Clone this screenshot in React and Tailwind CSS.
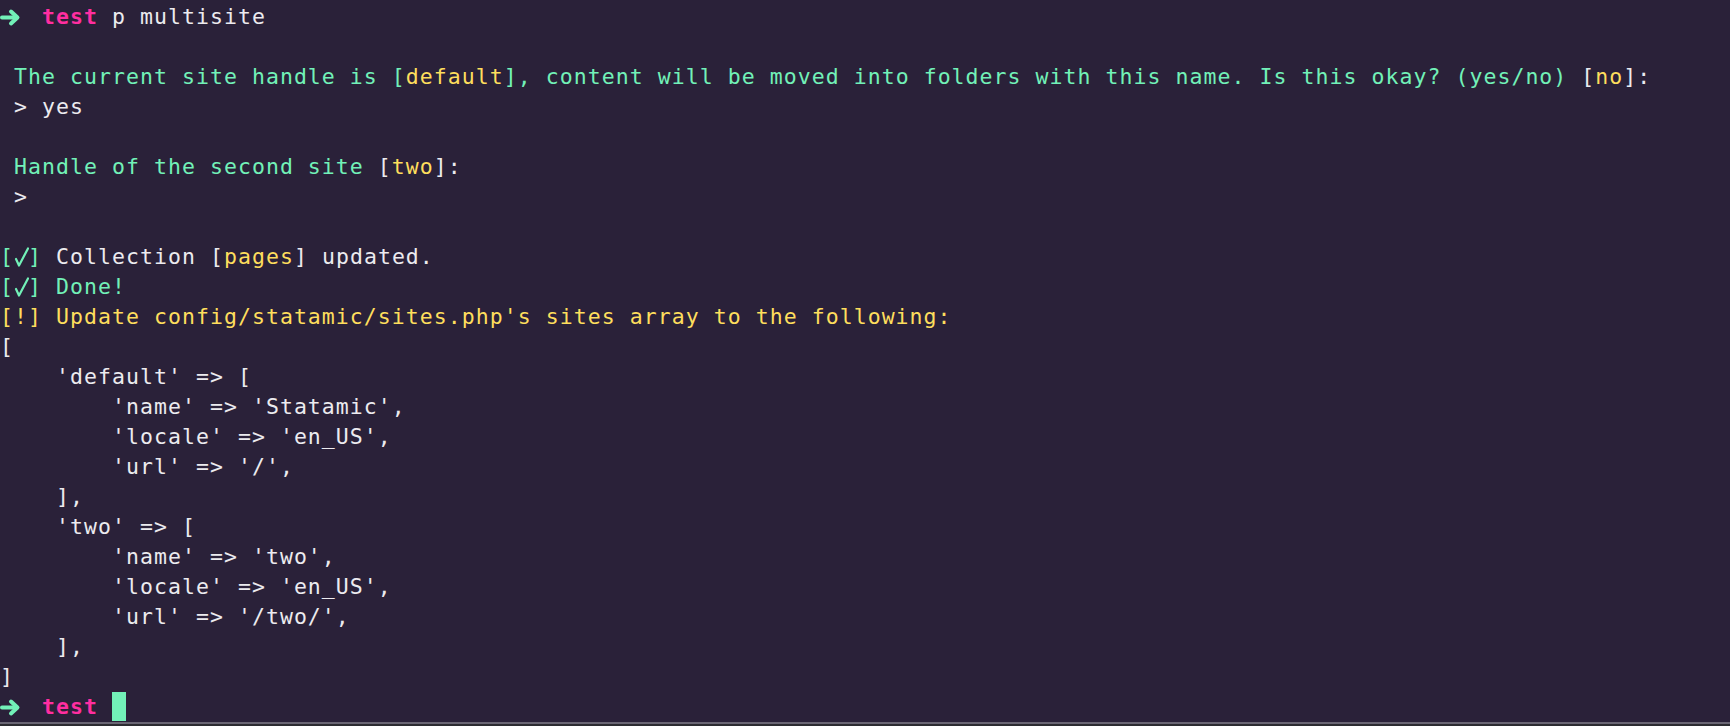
import React from 'react'

const G = 'text-[#72f1b8]'
const Y = 'text-[#fede5d]'
const W = 'text-[#ecebef]'
const P = 'text-[#ff2ea0] font-bold'

// thick zsh arrow, drawn since the font glyph is too thin
const Arrow = () => (
  <span className="inline-block w-[28px] h-[30px] align-top">
    <svg width="21" height="30" viewBox="0 0 21 30" className="block">
      <path d="M2 15.5 H16" stroke="#72f1b8" strokeWidth="4" strokeLinecap="round" />
      <path d="M11 9.5 L17.5 15.5 L11 21.5" stroke="#72f1b8" strokeWidth="4" fill="none" strokeLinecap="round" strokeLinejoin="round" />
    </svg>
  </span>
)

const Check = () => (
  <span className="inline-block w-[14px] h-[30px] align-top">
    <svg width="15" height="30" viewBox="0 0 15 30" className="block">
      <path d="M2 17 L5 23.5 L14 6.5" stroke="#72f1b8" strokeWidth="2.2" fill="none" strokeLinecap="round" strokeLinejoin="round" />
    </svg>
  </span>
)

const Prompt = ({children}) => (
  <>
    <Arrow />
    {' '}
    <span className={P}>test</span>
    {children}
  </>
)

const lines = [
  <Prompt><span className={W}> p multisite</span></Prompt>,
  '',
  <>
    <span className={G}> The current site handle is [</span>
    <span className={Y}>default</span>
    <span className={G}>], content will be moved into folders with this name. Is this okay? (yes/no) </span>
    <span className={W}>[</span>
    <span className={Y}>no</span>
    <span className={W}>]:</span>
  </>,
  <span className={W}> &gt; yes</span>,
  '',
  <>
    <span className={G}> Handle of the second site </span>
    <span className={W}>[</span>
    <span className={Y}>two</span>
    <span className={W}>]:</span>
  </>,
  <span className={W}> &gt;</span>,
  '',
  <>
    <span className={G}>[<Check />]</span>
    <span className={W}> Collection [</span>
    <span className={Y}>pages</span>
    <span className={W}>] updated.</span>
  </>,
  <span className={G}>[<Check />] Done!</span>,
  <span className={Y}>[!] Update config/statamic/sites.php's sites array to the following:</span>,
  '[',
  "    'default' => [",
  "        'name' => 'Statamic',",
  "        'locale' => 'en_US',",
  "        'url' => '/',",
  '    ],',
  "    'two' => [",
  "        'name' => 'two',",
  "        'locale' => 'en_US',",
  "        'url' => '/two/',",
  '    ],',
  ']',
  <Prompt>
    {' '}
    <span className="inline-block w-[14px] h-[29px] align-top bg-[#72f1b8]"></span>
  </Prompt>,
]

const App = () => {
  return (
    <div className="w-[1730px] h-[726px] bg-[#2a2139] flex flex-col overflow-hidden">
      <div className="flex-1 pt-[2px] text-[21.5px] tracking-[1.05px] leading-[30px] whitespace-pre text-[#ecebef]"
        style={{fontFamily: '"DejaVu Sans Mono", "Liberation Mono", monospace'}}>
        {lines.map((l, i) => (
          <div key={i} className="h-[30px]">{l}</div>
        ))}
      </div>
      <div className="h-[2px] bg-[#6a6674]"></div>
      <div className="h-[2px] bg-[#2c2b31]"></div>
    </div>
  )
}

export default App
